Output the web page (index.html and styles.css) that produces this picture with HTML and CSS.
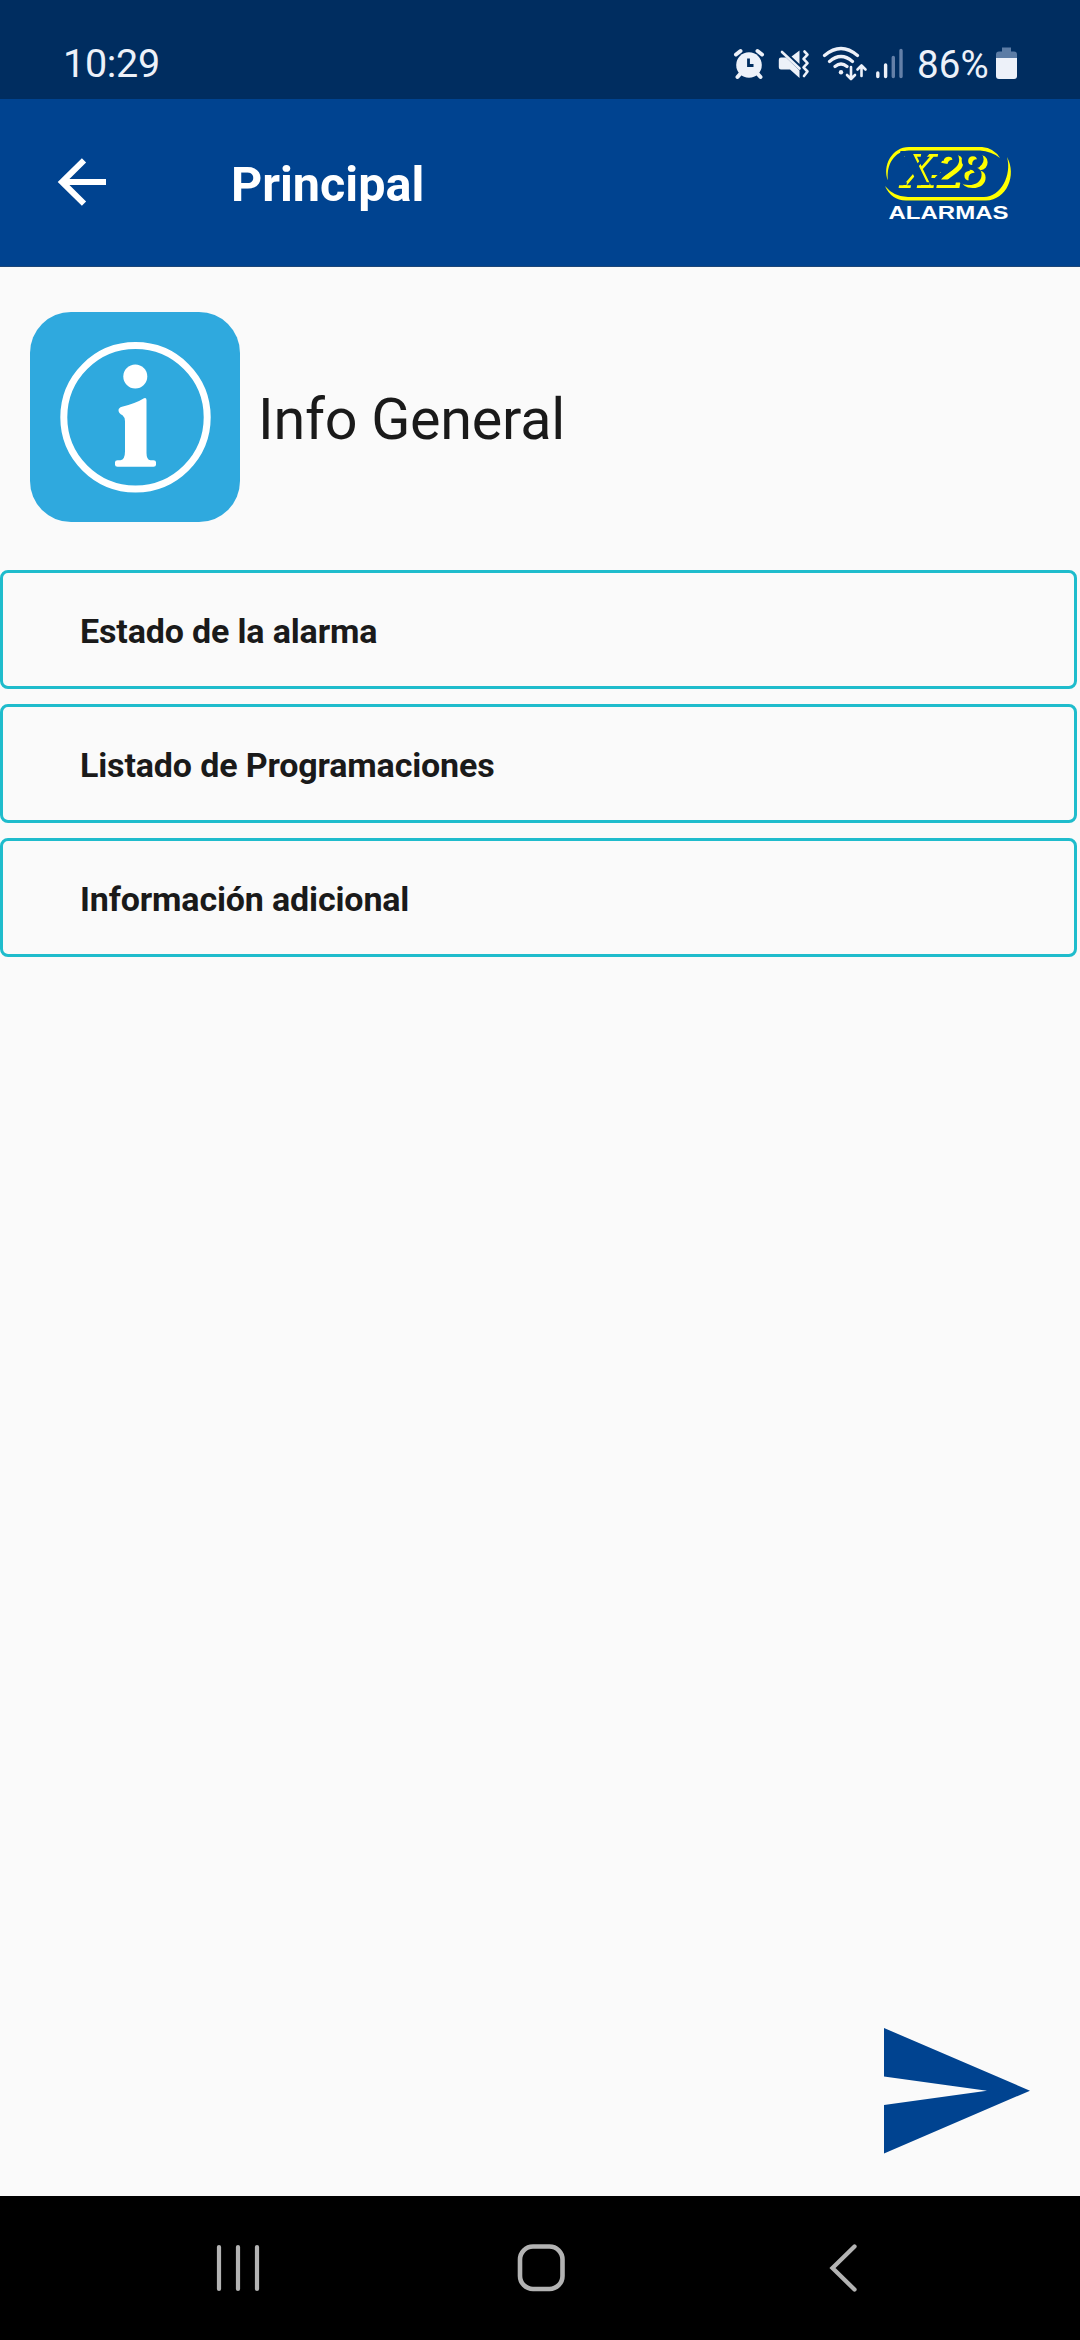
FILE: index.html
```html
<!DOCTYPE html>
<html lang="es">
<head>
<meta charset="utf-8">
<title>Info General</title>
<link rel="stylesheet" href="styles.css">
</head>
<body>
<div class="screen">
  <div class="status">
    <span class="clock">10:29</span>
    <div class="indicators">
      <svg width="40" height="40" viewBox="730 44 40 40" fill="#edf1f9" stroke="#edf1f9" stroke-linecap="round">
        <circle cx="749" cy="65" r="12.8" stroke="none"/>
        <path d="M736 54.5l4.500-3.500M762 54.500l-4.500-3.500M741 73l-3.500 4M757 73l3.500 4" stroke-width="4"/>
        <path d="M748.500 58.500v7h5" fill="none" stroke="#002d60" stroke-width="2.800" stroke-linecap="butt"/>
      </svg>
      <svg width="50" height="40" viewBox="770 44 50 40" fill="#edf1f9">
        <path d="M799.500 50.500v13.500l-8-7.500zM781 57.500h5l13.500 13v7.500l-9.500-8.500h-9q-2.200 0-2.200-2.200v-7.600q0-2.200 2.200-2.200z"/>
        <path d="M782 52l17.500 16.500" fill="none" stroke="#edf1f9" stroke-width="2.600" stroke-linecap="round"/>
        <path d="M804.500 51.500l3 3.200-4 4.200 4 4.200-4 4.200 4 4.200-3.500 4.500" fill="none" stroke="#edf1f9" stroke-width="2.600" stroke-linecap="round" stroke-linejoin="round"/>
      </svg>
      <svg width="52" height="40" viewBox="820 44 52 40" fill="none" stroke="#edf1f9" stroke-width="3.200" stroke-linecap="round" stroke-linejoin="round">
        <path d="M824.500 55.500q16.500-14 33 0M829.500 61.500q11.500-10 23 0M835 66.500q6-5 12 0"/>
        <circle cx="841" cy="72.300" r="2.200" fill="#edf1f9" stroke="none"/>
        <path d="M851 67v11.500M847 75l4 4 4-4M861.500 76V66M857.500 69.500l4-4 4 4" stroke-width="2.600"/>
      </svg>
      <svg width="38" height="40" viewBox="872 44 38 40" fill="none" stroke="#edf1f9" stroke-width="3.400" stroke-linecap="round">
        <path d="M877.800 73v3.500M885.600 65v11.500"/>
        <path d="M893.300 57.500v19M901 50.500v26" stroke="#6480a8"/>
      </svg>
      <span class="percent">86%</span>
      <svg width="30" height="40" viewBox="990 44 30 40">
        <path d="M1002 47.500h9v4h3q3 0 3 3v4h-21v-4q0-3 3-3h3z" fill="#5c7ca5"/>
        <path d="M996 58h21v18q0 3-3 3h-15q-3 0-3-3z" fill="#edf1f9"/>
      </svg>
    </div>
  </div>
  <header class="appbar">
    <svg class="back" width="60" height="60" viewBox="52 152 60 60" fill="none" stroke="#fff" stroke-width="6">
      <path d="M106 182H63M84 160.300L62 182l22 21.700"/>
    </svg>
    <h1 class="title">Principal</h1>
    <svg class="logo" width="160" height="110" viewBox="0 0 160 110">
      <path d="M18 50.500C12 36 22 17 39 17H112Q124 18 130 28Q121 21 110 20.500H39C24 21 16 35 18 50.500Z" fill="#ff0"/>
      <path d="M15 56Q24 67 38 67H114C131 67 142 45 137 27C147 45 137 70 116 70.500H36Q21 70 15 56Z" fill="#ff0"/>
      <text class="logo-mark" y="55"><tspan class="logo-x" x="27">X</tspan><tspan x="56">-</tspan><tspan x="63">2</tspan><tspan x="87">8</tspan></text>
      <text class="logo-name" x="18.500" y="88.500" textLength="120" lengthAdjust="spacingAndGlyphs">ALARMAS</text>
    </svg>
  </header>
  <main class="content">
    <div class="heading">
      <svg width="210" height="210" viewBox="30 312 210 210">
        <rect x="30" y="312" width="210" height="210" rx="41" fill="#2fa9de"/>
        <circle cx="135.500" cy="417.300" r="71.700" fill="none" stroke="#fff" stroke-width="7"/>
        <g fill="#fff">
          <circle cx="135.300" cy="376.600" r="12"/>
          <path d="M144 398.300q2.500-.8 2.500 1.700v53q0 7 4 7.300h3q2.500 0 2.500 2v2.500q0 2-2.500 2h-36q-2.500 0-2.500-2v-2.500q0-2 2.500-2h3q4.500-.8 4.500-9v-30q0-4-2.500-6-4-2-4-5 0-2.500 3.500-3.500 14-3.500 22-8.500z"/>
        </g>
      </svg>
      <h2 class="heading-text">Info General</h2>
    </div>
    <nav class="options">
      <a class="option">Estado de la alarma</a>
      <a class="option">Listado de Programaciones</a>
      <a class="option">Información adicional</a>
    </nav>
    <svg class="send" width="146" height="126" viewBox="0 0 146 126">
      <path d="M0 0L146 62.700 0 125.500V77L103 62.700 0 48.500z" fill="#004390"/>
    </svg>
  </main>
  <footer class="navbar">
    <svg width="50" height="50" viewBox="213 2243 50 50" stroke="#b3b3b3" stroke-width="4.200" stroke-linecap="round">
      <path d="M219 2247v42M238 2247v42M257 2247v42"/>
    </svg>
    <svg width="50" height="50" viewBox="515 2243 50 50" fill="none" stroke="#b3b3b3" stroke-width="4.600">
      <rect x="519" y="2246.500" width="42.500" height="42.500" rx="13"/>
    </svg>
    <svg width="50" height="50" viewBox="819 2243 50 50" fill="none" stroke="#b3b3b3" stroke-width="4.300" stroke-linecap="round">
      <path d="M854.500 2246.500L832.500 2268l22 21.500"/>
    </svg>
  </footer>
</div>
</body>
</html>
```

FILE: styles.css
```css
* {
  box-sizing: border-box;
}

body {
  margin: 0;
  font-family: Roboto, sans-serif;
  background: #fafafa;
  color: #1a1a1a;
}

svg {
  display: block;
  flex: none;
}

.screen {
  display: flex;
  flex-direction: column;
  width: 1080px;
  height: 2340px;
}

.status {
  display: flex;
  justify-content: space-between;
  height: 99px;
  padding: 44px 60px 0 63px;
  background: #002d60;
  color: #edf1f9;
  font-size: 39.5px;
  line-height: 40px;
}

.clock {
  letter-spacing: -0.3px;
}

.indicators {
  display: flex;
}

.percent {
  width: 80px;
  padding-left: 7px;
  font-size: 38.5px;
  letter-spacing: 0.1px;
  line-height: 41px;
}

.appbar {
  display: flex;
  align-items: flex-start;
  height: 168px;
  padding: 31px 50px 0 52px;
  background: #004390;
  border-bottom: 1px solid #1c4678;
  color: #fff;
}

.back {
  margin-top: 22px;
}

.title {
  flex: 1;
  margin: 26px 0 0 119px;
  font-size: 48.5px;
  font-weight: 700;
  line-height: 57px;
}

.logo-mark {
  fill: #004390;
  font: italic 700 48px "Liberation Sans", sans-serif;
  filter: drop-shadow(4px 3.5px 0 #ff0);
}

.logo-x {
  font-family: "DejaVu Serif", serif;
  font-size: 46px;
}

.logo-name {
  fill: #fff;
  font: 700 18.5px "Liberation Sans", sans-serif;
}

.content {
  display: flex;
  flex: 1;
  flex-direction: column;
  padding: 45px 0 42px;
}

.heading {
  display: flex;
  align-items: center;
  gap: 18px;
  padding-left: 30px;
}

.heading-text {
  margin: 5px 0 0;
  font-size: 57.5px;
  font-weight: 400;
  letter-spacing: -0.25px;
  line-height: 68px;
}

.options {
  display: flex;
  flex-direction: column;
  gap: 15px;
  width: 1077px;
  margin-top: 48px;
}

.option {
  height: 119px;
  padding: 38px 77px 0;
  border: 3px solid #1fbccc;
  border-radius: 8px;
  font-size: 34px;
  font-weight: 700;
  letter-spacing: -0.15px;
  line-height: 40px;
}

.send {
  margin: auto 50px 0 auto;
}

.navbar {
  display: flex;
  align-items: flex-start;
  justify-content: space-between;
  height: 144px;
  padding: 47px 211px 0 213px;
  background: #000;
}
```
